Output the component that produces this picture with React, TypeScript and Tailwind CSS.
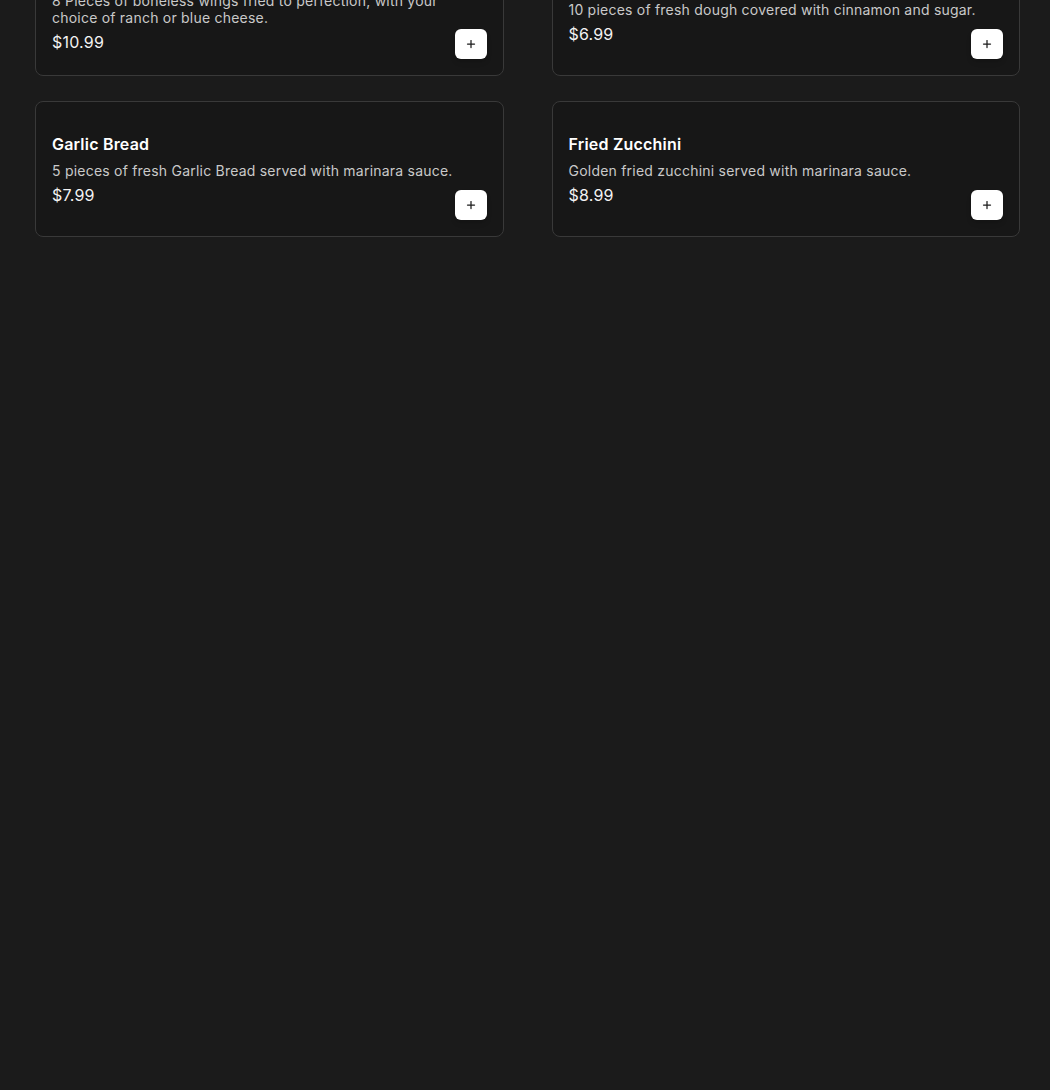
import { Plus } from 'lucide-react';

type MenuItem = {
    name: string;
    description: string;
    price: string;
};

const items: MenuItem[] = [
    {
        name: 'Boneless Wings',
        description: '8 Pieces of boneless wings fried to perfection, with your choice of ranch or blue cheese.',
        price: '$10.99',
    },
    {
        name: 'Cinnamon Bites',
        description: '10 pieces of fresh dough covered with cinnamon and sugar.',
        price: '$6.99',
    },
    {
        name: 'Garlic Bread',
        description: '5 pieces of fresh Garlic Bread served with marinara sauce.',
        price: '$7.99',
    },
    {
        name: 'Fried Zucchini',
        description: 'Golden fried zucchini served with marinara sauce.',
        price: '$8.99',
    },
];

function MenuCard({ item }: { item: MenuItem }) {
    return (
        <div className="relative flex h-[136px] items-center rounded-lg border border-[#393939] bg-[#171717] px-4">
            <div className="flex max-w-[420px] flex-col">
                <h3 className="text-base leading-6 font-semibold tracking-[0.2px] text-white">{item.name}</h3>
                <p className="mt-1.5 text-sm leading-[17px] tracking-[0.22px] text-[#c9c9c9]">{item.description}</p>
                <span className="mt-1 text-base leading-6 tracking-[0.2px] text-[#f2f2f2]">{item.price}</span>
            </div>

            {/* Add button */}
            <button
                type="button"
                className="absolute right-4 bottom-4 flex h-[30px] w-8 items-center justify-center rounded-md bg-white shadow-md"
                aria-label={`Add ${item.name}`}
            >
                <Plus className="h-3 w-3 text-[#1b1b1b]" strokeWidth={2.5} />
            </button>
        </div>
    );
}

export default function App() {
    return (
        <div
            className="h-[1090px] overflow-hidden bg-[#1b1b1b]"
            style={{ fontFamily: 'Inter, "Noto Sans", sans-serif' }}
        >
            <div className="-mt-[60px] grid grid-cols-2 gap-x-12 gap-y-[25px] pr-[30px] pl-[35px]">
                {items.map((item) => (
                    <MenuCard key={item.name} item={item} />
                ))}
            </div>
        </div>
    );
}
